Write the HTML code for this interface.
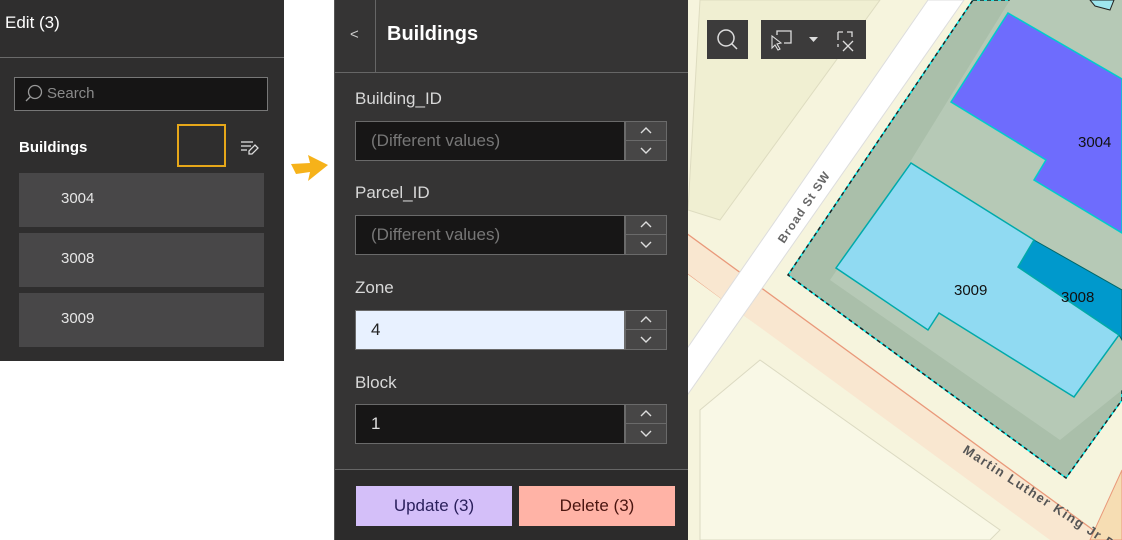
<!DOCTYPE html>
<html><head><meta charset="utf-8"><style>
*{box-sizing:border-box;margin:0;padding:0}
html,body{width:1122px;height:540px;overflow:hidden}
body{background:#fff;position:relative;font-family:"Liberation Sans",sans-serif}
.a{position:absolute}
.lp{left:0;top:0;width:284px;height:361px;background:#2f2e2e}
.row{left:19px;width:245px;height:54px;background:#484748;color:#e6e6e6;font-size:15px;padding:17px 0 0 42px}
.mp{left:334px;top:0;width:354px;height:540px;background:#353434;border-left:1px solid #555}
.lbl{left:20px;color:#d8d8d8;font-size:17px}
.inp{left:20px;width:270px;height:40px;background:#171616;border:1px solid #6a6a6a;color:#777;font-size:17px;padding:9px 0 0 15px}
.sp{left:290px;width:42px;height:40px;border:1px solid #6a6a6a;background:#474646}
.sp div{height:19px;border-bottom:1px solid #6a6a6a;position:relative}
.sp div:last-child{border:none}
.sp svg{position:absolute;left:14px;top:5px}
</style></head><body>
<div class="a lp">
 <div class="a" style="left:5px;top:13px;color:#fff;font-size:17px">Edit (3)</div>
 <div class="a" style="left:0;top:57px;width:284px;height:1px;background:#6a6a6a"></div>
 <div class="a" style="left:14px;top:77px;width:254px;height:34px;background:#161515;border:1px solid #777;color:#8a8a8a;font-size:15px;padding:7px 0 0 32px">Search</div>
 <svg class="a" style="left:24px;top:84px" width="20" height="20"><circle cx="11" cy="8" r="6.5" fill="none" stroke="#999" stroke-width="1.3"/><line x1="6.5" y1="12.5" x2="2" y2="17" stroke="#999" stroke-width="1.3"/></svg>
 <div class="a" style="left:19px;top:139px;color:#fff;font-size:15px;font-weight:bold">Buildings</div>
 <div class="a" style="left:177px;top:124px;width:49px;height:43px;border:2px solid #e6a719"></div>
 <svg class="a" style="left:240px;top:139px" width="20" height="18"><g stroke="#ddd" stroke-width="1.3" fill="none"><line x1="1" y1="3" x2="13" y2="3"/><line x1="1" y1="7" x2="11" y2="7"/><line x1="1" y1="11" x2="7" y2="11"/><path d="M9 15 L9 12 L15 6 L18 9 L12 15 Z"/></g></svg>
 <div class="a row" style="top:173px">3004</div>
 <div class="a row" style="top:233px">3008</div>
 <div class="a row" style="top:293px">3009</div>
</div>
<svg class="a" style="left:288px;top:152px" width="44" height="34"><path d="M3 12 L22 11 L20 3 L40 13 L20 29 L22 20 L8 22 Z" fill="#f6b21a"/></svg>
<div class="a mp">
 <div class="a" style="left:15px;top:26px;color:#ccc;font-size:15px">&lt;</div>
 <div class="a" style="left:40px;top:0;width:1px;height:73px;background:#666"></div>
 <div class="a" style="left:52px;top:23px;color:#fff;font-size:20px;font-weight:bold">Buildings</div>
 <div class="a" style="left:0;top:72px;width:354px;height:1px;background:#666"></div>
 <div class="a lbl" style="top:89px">Building_ID</div>
 <div class="a inp" style="top:121px">(Different values)</div>
 <div class="a sp" style="top:121px"><div><svg width="12" height="8"><path d="M1 6 L6 1 L11 6" fill="none" stroke="#ddd" stroke-width="1.4"/></svg></div><div><svg width="12" height="8"><path d="M1 2 L6 7 L11 2" fill="none" stroke="#ddd" stroke-width="1.4"/></svg></div></div>
 <div class="a lbl" style="top:183px">Parcel_ID</div>
 <div class="a inp" style="top:215px">(Different values)</div>
 <div class="a sp" style="top:215px"><div><svg width="12" height="8"><path d="M1 6 L6 1 L11 6" fill="none" stroke="#ddd" stroke-width="1.4"/></svg></div><div><svg width="12" height="8"><path d="M1 2 L6 7 L11 2" fill="none" stroke="#ddd" stroke-width="1.4"/></svg></div></div>
 <div class="a lbl" style="top:278px">Zone</div>
 <div class="a inp" style="top:310px;background:#e8f1ff;color:#222">4</div>
 <div class="a sp" style="top:310px"><div><svg width="12" height="8"><path d="M1 6 L6 1 L11 6" fill="none" stroke="#ddd" stroke-width="1.4"/></svg></div><div><svg width="12" height="8"><path d="M1 2 L6 7 L11 2" fill="none" stroke="#ddd" stroke-width="1.4"/></svg></div></div>
 <div class="a lbl" style="top:373px">Block</div>
 <div class="a inp" style="top:404px;color:#ddd">1</div>
 <div class="a sp" style="top:404px"><div><svg width="12" height="8"><path d="M1 6 L6 1 L11 6" fill="none" stroke="#ddd" stroke-width="1.4"/></svg></div><div><svg width="12" height="8"><path d="M1 2 L6 7 L11 2" fill="none" stroke="#ddd" stroke-width="1.4"/></svg></div></div>
 <div class="a" style="left:0;top:469px;width:353px;height:71px;background:#2c2b2b;border-top:1px solid #666"></div>
 <div class="a" style="left:21px;top:486px;width:156px;height:40px;background:#d4bff9;color:#2a1f5c;font-size:17px;text-align:center;line-height:40px">Update (3)</div>
 <div class="a" style="left:184px;top:486px;width:156px;height:40px;background:#ffb3a6;color:#4a1510;font-size:17px;text-align:center;line-height:40px">Delete (3)</div>
</div>
<svg class="a" style="left:0;top:0" width="1122" height="540" viewBox="0 0 1122 540">
 <defs><clipPath id="c"><rect x="688" y="0" width="434" height="540"/></clipPath></defs>
 <g clip-path="url(#c)">
 <rect x="688" y="0" width="434" height="540" fill="#f6f4dd"/>
 <path d="M700 0 L880 0 L720 220 L688 210 Z" fill="#f0efd2" stroke="#dedcc0"/>
 <polygon points="686,233 1122,551 1122,600 686,273" fill="#f9e7d0" stroke="#e9997a" stroke-width="1.3"/>
 <polygon points="686,273 1050,540 700,540 686,540" fill="#f6f4dd"/>
 <path d="M760 360 L1000 530 L990 540 L700 540 L700 410 Z" fill="#f9f8e6" stroke="#dcdac2"/>
 <polygon points="1090,540 1122,470 1122,540" fill="#f6ddb3" stroke="#e9997a"/>
 <polygon points="928,0 964,0 686,397 686,350" fill="#fff" stroke="#ddd"/>
 <polygon points="973,0 1122,0 1122,400 1066,478 788,275" fill="#aabfaa" stroke="#0ee" stroke-width="1.5"/>
 <polygon points="973,0 1122,0 1122,400 1066,478 788,275" fill="none" stroke="#222" stroke-width="1.5" stroke-dasharray="4 3"/>
 <polygon points="1010,0 1122,0 1122,390 1060,440 830,280 905,170" fill="#b6c9b6"/>
 <polygon points="1090,0 1114,0 1110,10 1095,6" fill="#9fe6ef" stroke="#222"/>
 <polygon points="1008,13 1122,79 1122,233 1034,180 1046,160 951,102" fill="#6e6cfd" stroke="#0cc" stroke-width="1.5"/>
 <polygon points="1034,240 1122,290 1122,340 1119,335 1018,267" fill="#0099cc" stroke="#066" stroke-width="1"/>
 <polygon points="911,163 1034,240 1018,267 1119,335 1074,397 939,313 928,330 836,268" fill="#90daf2" stroke="#0aa" stroke-width="1.5"/>
 <g font-family="Liberation Sans" font-size="15" fill="#111">
  <text x="1078" y="147">3004</text><text x="954" y="295">3009</text><text x="1061" y="302">3008</text>
 </g>
 <text x="0" y="0" font-family="Liberation Sans" font-size="12" font-weight="bold" letter-spacing="1" fill="#666" transform="translate(784,244) rotate(-56)">Broad St SW</text>
 <text x="0" y="0" font-family="Liberation Sans" font-size="13" font-weight="bold" letter-spacing="1.5" fill="#555" transform="translate(962,452) rotate(33)">Martin Luther King Jr Dr</text>
 </g>
 <rect x="707" y="20" width="41" height="39" fill="#3c3b3b"/>
 <circle cx="726" cy="38" r="8" fill="none" stroke="#ddd" stroke-width="1.5"/><line x1="732" y1="44" x2="737" y2="49" stroke="#ddd" stroke-width="1.5"/>
 <rect x="761" y="20" width="105" height="39" fill="#3c3b3b"/>
 <path d="M777 35 L777 31 L791 31 L791 43 L784 43" fill="none" stroke="#ddd" stroke-width="1.3"/>
 <path d="M772 36 L772 48 L775 45 L778 50 L780 49 L777 44 L781 43 Z" fill="none" stroke="#ddd" stroke-width="1.1"/>
 <path d="M809 37 L818 37 L813.5 42 Z" fill="#ddd"/>
 <path d="M838 32 L838 40 M838 44 L838 47 M838 32 L843 32 M847 32 L852 32 L852 37 M843 41 L853 51 M853 41 L843 51" fill="none" stroke="#ddd" stroke-width="1.3"/>
</svg>
</body></html>
